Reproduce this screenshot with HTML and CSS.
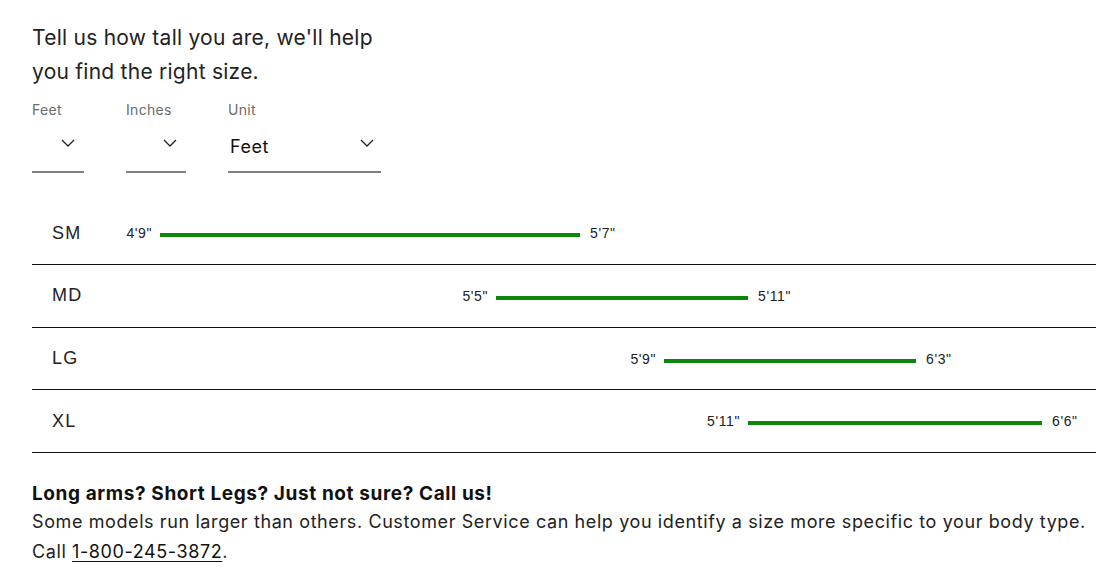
FILE: index.html
```html
<!DOCTYPE html>
<html lang="en">
<head>
<meta charset="utf-8">
<title>Size finder</title>
<link rel="stylesheet" href="styles.css">
</head>
<body>
<main class="page">
  <h2 class="intro">Tell us how tall you are, we'll help<br>you find the right size.</h2>

  <div class="fields">
    <div class="field field-feet">
      <label class="field-label">Feet</label>
      <div class="select">
        <span class="select-value"></span>
        <svg class="chevron" width="14" height="8" viewBox="0 0 14 8"><path d="M1 1 L7 7 L13 1" fill="none" stroke="#222" stroke-width="1.3"/></svg>
      </div>
    </div>
    <div class="field field-inches">
      <label class="field-label">Inches</label>
      <div class="select">
        <span class="select-value"></span>
        <svg class="chevron" width="14" height="8" viewBox="0 0 14 8"><path d="M1 1 L7 7 L13 1" fill="none" stroke="#222" stroke-width="1.3"/></svg>
      </div>
    </div>
    <div class="field field-unit">
      <label class="field-label">Unit</label>
      <div class="select">
        <span class="select-value">Feet</span>
        <svg class="chevron" width="14" height="8" viewBox="0 0 14 8"><path d="M1 1 L7 7 L13 1" fill="none" stroke="#222" stroke-width="1.3"/></svg>
      </div>
    </div>
  </div>

  <div class="chart">
    <div class="row">
      <div class="size">SM</div>
      <div class="offset" style="width:48px"><span class="val">4'9"</span></div>
      <div class="bar" style="width:420px"></div>
      <span class="val val-max">5'7"</span>
    </div>
    <div class="row">
      <div class="size">MD</div>
      <div class="offset" style="width:384px"><span class="val">5'5"</span></div>
      <div class="bar" style="width:252px"></div>
      <span class="val val-max">5'11"</span>
    </div>
    <div class="row">
      <div class="size">LG</div>
      <div class="offset" style="width:552px"><span class="val">5'9"</span></div>
      <div class="bar" style="width:252px"></div>
      <span class="val val-max">6'3"</span>
    </div>
    <div class="row">
      <div class="size">XL</div>
      <div class="offset" style="width:636px"><span class="val">5'11"</span></div>
      <div class="bar" style="width:294px"></div>
      <span class="val val-max">6'6"</span>
    </div>
  </div>

  <div class="help">
    <p class="help-title">Long arms? Short Legs? Just not sure? Call us!</p>
    <p class="help-text">Some models run larger than others. Customer Service can help you identify a size more specific to your body type. Call <a href="#" class="phone">1-800-245-3872</a>.</p>
  </div>
</main>
</body>
</html>
```

FILE: styles.css
```css
html, body {
  margin: 0;
  padding: 0;
  background: #fff;
}

body {
  font-family: Inter, "Noto Sans", sans-serif;
  color: #1f1f1f;
}

.page {
  padding: 21px 0 0 32px;
}

.intro {
  margin: 0;
  font-size: 21px;
  font-weight: 400;
  line-height: 34px;
  letter-spacing: 0.25px;
  color: #222;
}

.fields {
  display: flex;
  gap: 42px;
  margin-top: 11px;
}

.field {
  display: flex;
  flex-direction: column;
}

.field-feet { width: 52px; }
.field-inches { width: 60px; }
.field-unit { width: 153px; }

.field-label {
  font-size: 14px;
  line-height: 20px;
  letter-spacing: 0.3px;
  color: #6b6b6b;
}

.select {
  display: flex;
  align-items: center;
  justify-content: space-between;
  height: 49px;
  margin-top: 2px;
  border-bottom: 2px solid #808080;
  padding: 0 9px 0 2px;
}

.field-unit .select {
  padding-right: 7px;
}

.select-value {
  font-size: 18px;
  letter-spacing: 0.5px;
  color: #111;
}

.chevron {
  display: block;
  margin-left: auto;
  margin-bottom: 8px;
}

.chart {
  margin-top: 29.5px;
}

.row {
  display: flex;
  align-items: center;
  height: 61.67px;
  border-bottom: 1px solid #111;
  font-family: "Liberation Sans", Arial, sans-serif;
  color: #222;
}

.size {
  width: 60px;
  padding-left: 20px;
  font-size: 18px;
  letter-spacing: 1.2px;
}

.offset {
  flex: none;
  display: flex;
  justify-content: flex-end;
  padding-right: 8px;
  box-sizing: border-box;
}

.val {
  font-size: 14px;
  letter-spacing: 0.6px;
  white-space: nowrap;
}

.bar {
  flex: none;
  height: 4px;
  margin-top: 4px;
  background: #0b850b;
}

.val-max {
  margin-left: 10px;
}

.help {
  margin-top: 27px;
}

.help p {
  margin: 0;
}

.help-title {
  font-size: 19px;
  font-weight: 700;
  line-height: 27px;
  letter-spacing: 0.6px;
  color: #111;
}

.help-text {
  font-size: 18px;
  line-height: 30px;
  letter-spacing: 0.6px;
  color: #222;
  padding-right: 8px;
}

.phone {
  color: #111;
  white-space: nowrap;
  text-decoration: underline;
  text-underline-offset: 3px;
}
```
